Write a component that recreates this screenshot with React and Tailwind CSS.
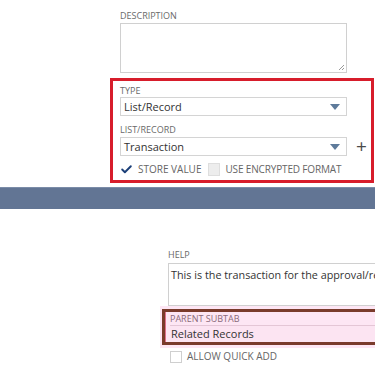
import { Check } from 'lucide-react'

function Label({ children, className = '' }){
  return <div className={`text-[9px] leading-[11px] uppercase text-[#6a6a6a] ${className}`}>{children}</div>
}

function Select({ value }){
  return (
    <div className="w-[227px] h-[19px] border border-[#d4d4d4] bg-white flex items-center justify-between pl-[3px] pr-[6px]">
      <span className="text-[11px] leading-none text-[#333]">{value}</span>
      <svg width="10" height="6" viewBox="0 0 10 6"><path d="M0 0h10L5 6z" fill="#5e7b9b"/></svg>
    </div>
  )
}

export default function App(){
  return (
    <div className="w-[375px] h-[366px] overflow-hidden bg-white font-['Open_Sans',sans-serif]">
      <div className="pl-[120px] pt-[10px]">
        <Label className="text-[9.5px] leading-[12px]">Description</Label>
        <div className="relative mt-[1px] w-[227px] h-[50px] border border-[#d0d0d0]">
          <svg className="absolute right-[1px] bottom-[1px]" width="7" height="7" viewBox="0 0 7 7">
            <path d="M6 1L1 6M6 4L4 6" stroke="#999" strokeWidth="1"/>
          </svg>
        </div>
      </div>

      <div className="ml-[110px] mt-[5px] w-[264px] h-[105px] border-[3px] border-[#d71d2b] pl-[7px] pt-[4px]">
        <Label>Type</Label>
        <div className="mt-[1px]"><Select value="List/Record" /></div>
        <Label className="mt-[8px]">List/Record</Label>
        <div className="mt-[2px] flex items-center">
          <Select value="Transaction" />
          <span className="ml-[9px] text-[19px] leading-none text-[#4a4a4a]">+</span>
        </div>
        <div className="mt-[6px] flex items-center text-[10px] leading-[14px] uppercase text-[#666]">
          <Check size={13} strokeWidth={3.5} className="text-[#1b3f78]" />
          <span className="ml-[5px]">Store value</span>
          <span className="ml-[7px] w-[12px] h-[13px] bg-[#ededed] border border-[#dedede]" />
          <span className="ml-[5px] tracking-[-0.15px]">Use encrypted format</span>
        </div>
      </div>

      <div className="mt-[4px] h-[22px] bg-[#627594] border-t border-[#7b8ca8]" />

      <div className="pl-[168px] pt-[40px]">
        <Label className="text-[9.5px] leading-[12px]">Help</Label>
        <div className="mt-[2px] h-[43px] border border-r-0 border-[#d0d0d0] pl-[2px] pt-[3px] text-[10.8px] leading-[15px] text-[#333] whitespace-nowrap overflow-hidden">
          This is the transaction for the approval/rej
        </div>
      </div>

      <div className="ml-[160px] bg-[#fde6f4] pt-[3px] pb-[3px] pl-[2px]">
        <div className="border-[3px] border-r-0 border-[#7a3b2c]">
          <div className="border-l border-[#e0708c] pl-[4px] pt-[1px]">
            <div className="text-[9px] leading-[11px] uppercase text-[#8a6a7a]">Parent subtab</div>
            <div className="mt-[1px] h-[17px] border-t border-[#e4c6d6] bg-[#fce4f2] flex items-center pl-[1px] text-[11px] text-[#333]">Related Records</div>
          </div>
        </div>
      </div>

      <div className="ml-[170px] mt-[1px] flex items-center text-[10px] uppercase text-[#666]">
        <span className="w-[12px] h-[12px] border border-[#cfcfcf] bg-white" />
        <span className="ml-[5px]">Allow quick add</span>
      </div>
    </div>
  )
}
